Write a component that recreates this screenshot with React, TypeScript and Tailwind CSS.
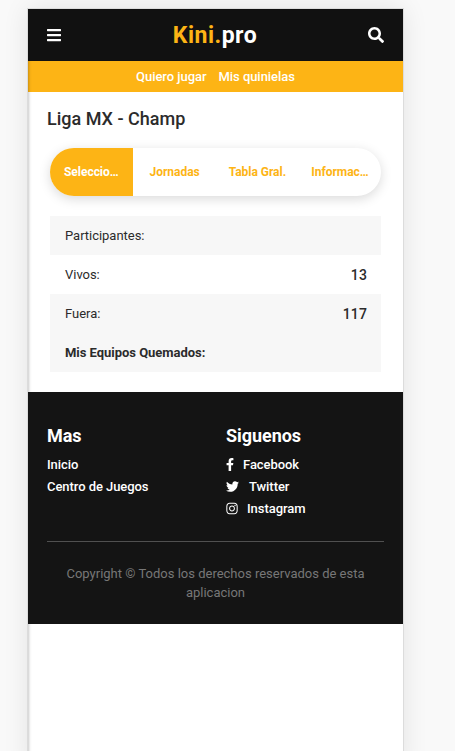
import React from "react";
import { FaBars, FaSearch, FaFacebookF, FaTwitter, FaInstagram } from "react-icons/fa";

const tabs = ["Seleccionar", "Jornadas", "Tabla Gral.", "Informacion"];

const rows = [
  { label: "Participantes:", value: "", style: "bg-[#f7f7f7]" },
  { label: "Vivos:", value: "13", style: "bg-white" },
  { label: "Fuera:", value: "117", style: "bg-[#f7f7f7]" },
  { label: "Mis Equipos Quemados:", value: "", style: "bg-[#f7f7f7] font-bold" },
];

export default function App() {
  return (
    <div className="flex h-[751px] w-[455px] overflow-hidden bg-[#f9f9f9] pl-[27px] pt-2 font-['Roboto',sans-serif] text-[#2b2b2b]">
      <div className="h-[760px] w-[377px] shrink-0 border border-[#dcdcdc] bg-white shadow-[0_0_24px_rgba(0,0,0,0.09)]">
        <header className="flex h-[52px] items-center justify-between bg-[#111] pl-[18px] pr-[19px] text-white">
          <FaBars className="h-4 w-4" />
          <div className="pt-px text-[23px] font-bold leading-[53px] tracking-[0.5px]">
            <span className="text-[#fdb415]">Kini.</span>pro
          </div>
          <FaSearch className="h-4 w-4" />
        </header>
        <nav className="flex h-[31px] items-center justify-center gap-3 bg-[#fdb415] text-[13px] font-medium tracking-[-0.05px] text-white shadow-[inset_4px_0_3px_-3px_rgba(0,0,0,0.22)]">
          <span>Quiero jugar</span>
          <span>Mis quinielas</span>
        </nav>
        <main className="h-[300px] px-[19px] shadow-[inset_4px_0_3px_-3px_rgba(0,0,0,0.22)]">
          <h1 className="pt-[13px] text-[18px] font-medium leading-7">Liga MX - Champ</h1>
          <div className="ml-[3px] mt-[15px] grid h-12 w-[331px] grid-cols-4 overflow-hidden rounded-full bg-white shadow-[0_3px_12px_rgba(0,0,0,0.15)]">
            {tabs.map((t, i) => (
              <button
                key={t}
                className={
                  i === 0
                    ? "min-w-0 truncate bg-[#fdb415] pl-[14px] pr-[12px] text-center text-[12px] font-bold tracking-[-0.03px] text-white"
                    : "min-w-0 truncate pl-[13px] pr-[12px] text-center text-[12px] font-bold tracking-[-0.03px] text-[#fdb415]"
                }
              >
                {t}
              </button>
            ))}
          </div>
          <div className="ml-[3px] mt-5 w-[331px] text-[13px]">
            {rows.map((r) => (
              <div key={r.label} className={"flex h-[39px] items-center justify-between px-[15px] " + r.style}>
                <span className="tracking-[-0.03px]">{r.label}</span>
                <span className="-mr-px pt-0.5 text-[14px] font-medium tracking-[0.15px]">{r.value}</span>
              </div>
            ))}
          </div>
        </main>
        <footer className="h-[232px] bg-[#141414] px-[19px] pt-[30px] text-[13px] font-medium text-white">
          <div className="grid h-[119px] grid-cols-[179px_1fr] tracking-[-0.06px]">
            <div>
              <h2 className="mb-1 text-[18px] font-bold leading-7">Mas</h2>
              <p className="leading-[22px]">Inicio</p>
              <p className="leading-[22px]">Centro de Juegos</p>
            </div>
            <div>
              <h2 className="mb-1 text-[18px] font-bold leading-7">Siguenos</h2>
              <p className="flex h-[22px] items-center">
                <FaFacebookF className="mr-[9px] h-[13px] w-2 -translate-y-px" />
                Facebook
              </p>
              <p className="flex h-[22px] items-center">
                <FaTwitter className="mr-[10px] h-[13px] w-[13px] -translate-y-px" />
                Twitter
              </p>
              <p className="flex h-[22px] items-center">
                <FaInstagram className="mr-[9px] h-[13px] w-[12px] -translate-y-px" />
                Instagram
              </p>
            </div>
          </div>
          <div className="border-t border-[#505050] pt-[22px] text-center font-normal leading-[19px] text-[#777]">
            <p>
              Copyright © Todos los derechos reservados de esta
              <br />
              aplicacion
            </p>
          </div>
        </footer>
        <div className="h-[200px] shadow-[inset_4px_0_3px_-3px_rgba(0,0,0,0.22)]" />
      </div>
    </div>
  );
}
